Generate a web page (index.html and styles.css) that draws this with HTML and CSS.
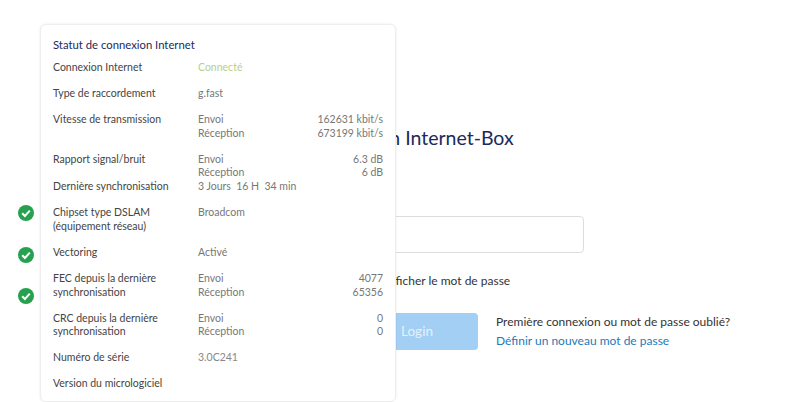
FILE: index.html
```html
<!DOCTYPE html>
<html lang="fr">
    <head>
        <meta charset="UTF-8" />
        <title>Internet-Box</title>
        <link rel="stylesheet" href="styles.css">
    </head>
    <body>
        <div class="page">
            <ul class="checks">
                <li class="check"><svg viewBox="0 0 16 16"><circle cx="8" cy="8" r="8" fill="#27a14f"/><path d="M4.2 8.2l2.7 2.8 4.9-5.4" fill="none" stroke="#fff" stroke-width="2"/></svg></li>
                <li class="check"><svg viewBox="0 0 16 16"><circle cx="8" cy="8" r="8" fill="#27a14f"/><path d="M4.2 8.2l2.7 2.8 4.9-5.4" fill="none" stroke="#fff" stroke-width="2"/></svg></li>
                <li class="check"><svg viewBox="0 0 16 16"><circle cx="8" cy="8" r="8" fill="#27a14f"/><path d="M4.2 8.2l2.7 2.8 4.9-5.4" fill="none" stroke="#fff" stroke-width="2"/></svg></li>
            </ul>

            <div class="login">
                <h1 class="login-title">Connexion Internet-Box</h1>
                <label class="field-label">Mot de passe</label>
                <div class="field"></div>
                <div class="show-pass">
                    <span class="checkbox"></span>
                    <span>Afficher le mot de passe</span>
                </div>
                <div class="actions">
                    <div class="btn">Login</div>
                    <div class="help">
                        <p>Première connexion ou mot de passe oublié?</p>
                        <a href="#">Définir un nouveau mot de passe</a>
                    </div>
                </div>
            </div>
        </div>

        <div class="status">
            <h2 class="status-title">Statut de connexion Internet</h2>
            <div class="row">
                <div class="row-label">Connexion Internet</div>
                <div class="row-value ok">Connecté</div>
            </div>
            <div class="row">
                <div class="row-label">Type de raccordement</div>
                <div class="row-value">g.fast</div>
            </div>
            <div class="row">
                <div class="row-label">Vitesse de transmission</div>
                <div class="row-value">
                    <div class="pair"><span>Envoi</span><span>162631 kbit/s</span></div>
                    <div class="pair"><span>Réception</span><span>673199 kbit/s</span></div>
                </div>
            </div>
            <div class="row row-tight">
                <div class="row-label">Rapport signal/bruit</div>
                <div class="row-value">
                    <div class="pair"><span>Envoi</span><span>6.3 dB</span></div>
                    <div class="pair"><span>Réception</span><span>6 dB</span></div>
                </div>
            </div>
            <div class="row">
                <div class="row-label">Dernière synchronisation</div>
                <div class="row-value">3 Jours&nbsp; 16 H&nbsp; 34 min</div>
            </div>
            <div class="row">
                <div class="row-label">Chipset type DSLAM<br>(équipement réseau)</div>
                <div class="row-value">Broadcom</div>
            </div>
            <div class="row">
                <div class="row-label">Vectoring</div>
                <div class="row-value">Activé</div>
            </div>
            <div class="row">
                <div class="row-label">FEC depuis la dernière<br>synchronisation</div>
                <div class="row-value">
                    <div class="pair"><span>Envoi</span><span>4077</span></div>
                    <div class="pair"><span>Réception</span><span>65356</span></div>
                </div>
            </div>
            <div class="row">
                <div class="row-label">CRC depuis la dernière<br>synchronisation</div>
                <div class="row-value">
                    <div class="pair"><span>Envoi</span><span>0</span></div>
                    <div class="pair"><span>Réception</span><span>0</span></div>
                </div>
            </div>
            <div class="row">
                <div class="row-label">Numéro de série</div>
                <div class="row-value"><span class="serial">3.0C241</span></div>
            </div>
            <div class="row">
                <div class="row-label">Version du micrologiciel</div>
                <div class="row-value"></div>
            </div>
        </div>
    </body>
</html>
```

FILE: styles.css
```css
* {
    margin: 0;
    padding: 0;
    box-sizing: border-box;
}

html,
body {
    width: 800px;
    height: 402px;
    overflow: hidden;
    background-color: #fff;
}

body {
    position: relative;
    font-family: "Lato", "Open Sans", sans-serif;
    color: #333;
}

.page {
    display: flex;
}

.checks {
    list-style: none;
    width: 300px;
    padding: 205px 0 0 18px;
}

.check {
    height: 16px;
    margin-bottom: 25.5px;
}

.check svg {
    display: block;
    width: 16px;
    height: 16px;
}

.login {
    width: 284px;
    padding-top: 124px;
}

.login-title {
    padding-left: 8px;
    font-size: 19.5px;
    line-height: 28px;
    font-weight: 400;
    color: #1b2a5c;
    white-space: nowrap;
}

.field-label {
    display: block;
    margin-top: 44px;
    font-size: 10.5px;
    line-height: 14px;
    color: #666;
}

.field {
    height: 37px;
    margin-top: 6px;
    border: 1px solid #ddd;
    border-radius: 4px;
}

.show-pass {
    display: flex;
    align-items: center;
    gap: 8px;
    margin-top: 19px;
    padding-left: 60px;
    font-size: 12px;
    line-height: 17px;
}

.checkbox {
    width: 16px;
    height: 16px;
}

.actions {
    display: flex;
    align-items: center;
    gap: 18px;
    margin-top: 23px;
}

.btn {
    flex: none;
    width: 178px;
    height: 37px;
    border-radius: 4px;
    background-color: #a3cff5;
    color: #e4f1fc;
    font-size: 13.5px;
    line-height: 37px;
    text-align: center;
    padding-left: 56px;
}

.help {
    flex: none;
    font-size: 12px;
    line-height: 19px;
    white-space: nowrap;
}

.help a {
    color: #1f7ab8;
    text-decoration: none;
}

/* tooltip over the login form */
.status {
    position: absolute;
    left: 40px;
    top: 24px;
    width: 356px;
    height: 378px;
    padding: 13px 12px 0;
    background-color: #fff;
    border: 1px solid #eee;
    border-radius: 6px;
    box-shadow: 0 0 3px rgba(0, 0, 0, 0.08);
    font-size: 10.5px;
    line-height: 13.7px;
}

.status-title {
    font-size: 11.3px;
    line-height: 14px;
    font-weight: 400;
    color: #1b2a5c;
    margin-bottom: 9px;
}

.row {
    display: flex;
    margin-bottom: 12.3px;
}

.row-tight {
    margin-bottom: 0;
}

.row-label {
    flex: none;
    width: 145px;
    color: #444;
}

.row-value {
    flex: 1;
    color: #777;
}

.ok {
    color: #b5d08a;
}

.pair {
    display: flex;
    justify-content: space-between;
}

.serial {
    color: #888;
}
```
